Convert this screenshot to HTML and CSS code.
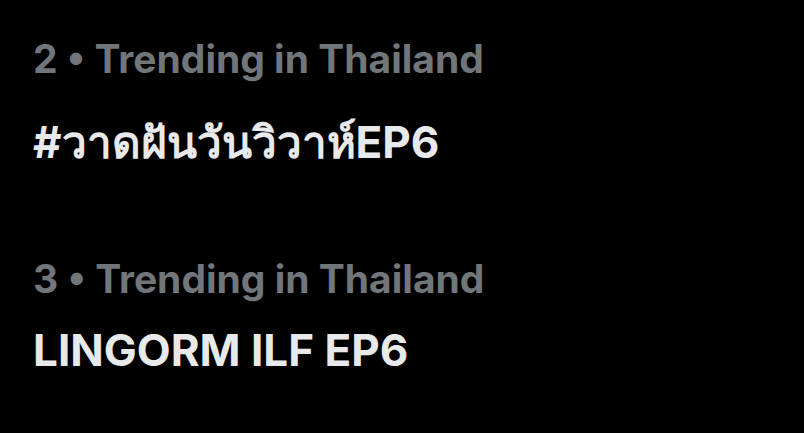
FILE: index.html
```html
<!DOCTYPE html>
<html>
  <head>
    <meta charset="UTF-8" />
    <title>Trends</title>
    <link rel="stylesheet" href="styles.css">
  </head>
  <body>
    <div id="trends">
      <div class="trend">
        <span class="meta">2 • Trending in Thailand</span>
        <a href="#" class="topic thai">#วาดฝันวันวิวาห์EP6</a>
      </div>
      <div class="trend">
        <span class="meta">3 • Trending in Thailand</span>
        <a href="#" class="topic">LINGORM ILF EP6</a>
      </div>
    </div>
  </body>
</html>
```

FILE: styles.css
```css
body {
  margin: 0;
  padding: 35px 33px 0;
  background-color: #000;
  color: #e7e9ea;
  font-family: Inter, "Noto Sans", sans-serif;
  font-weight: 700;
}
#trends {
  display: flex;
  flex-direction: column;
  gap: 87px;
}
.trend {
  display: flex;
  flex-direction: column;
  gap: 33px;
}
.trend + .trend {
  gap: 21px;
}
.meta {
  color: #71767b;
  font-size: 39px;
  line-height: 48px;
}
.topic {
  color: #e7e9ea;
  font-size: 44px;
  line-height: 52px;
  text-decoration: none;
}
```
